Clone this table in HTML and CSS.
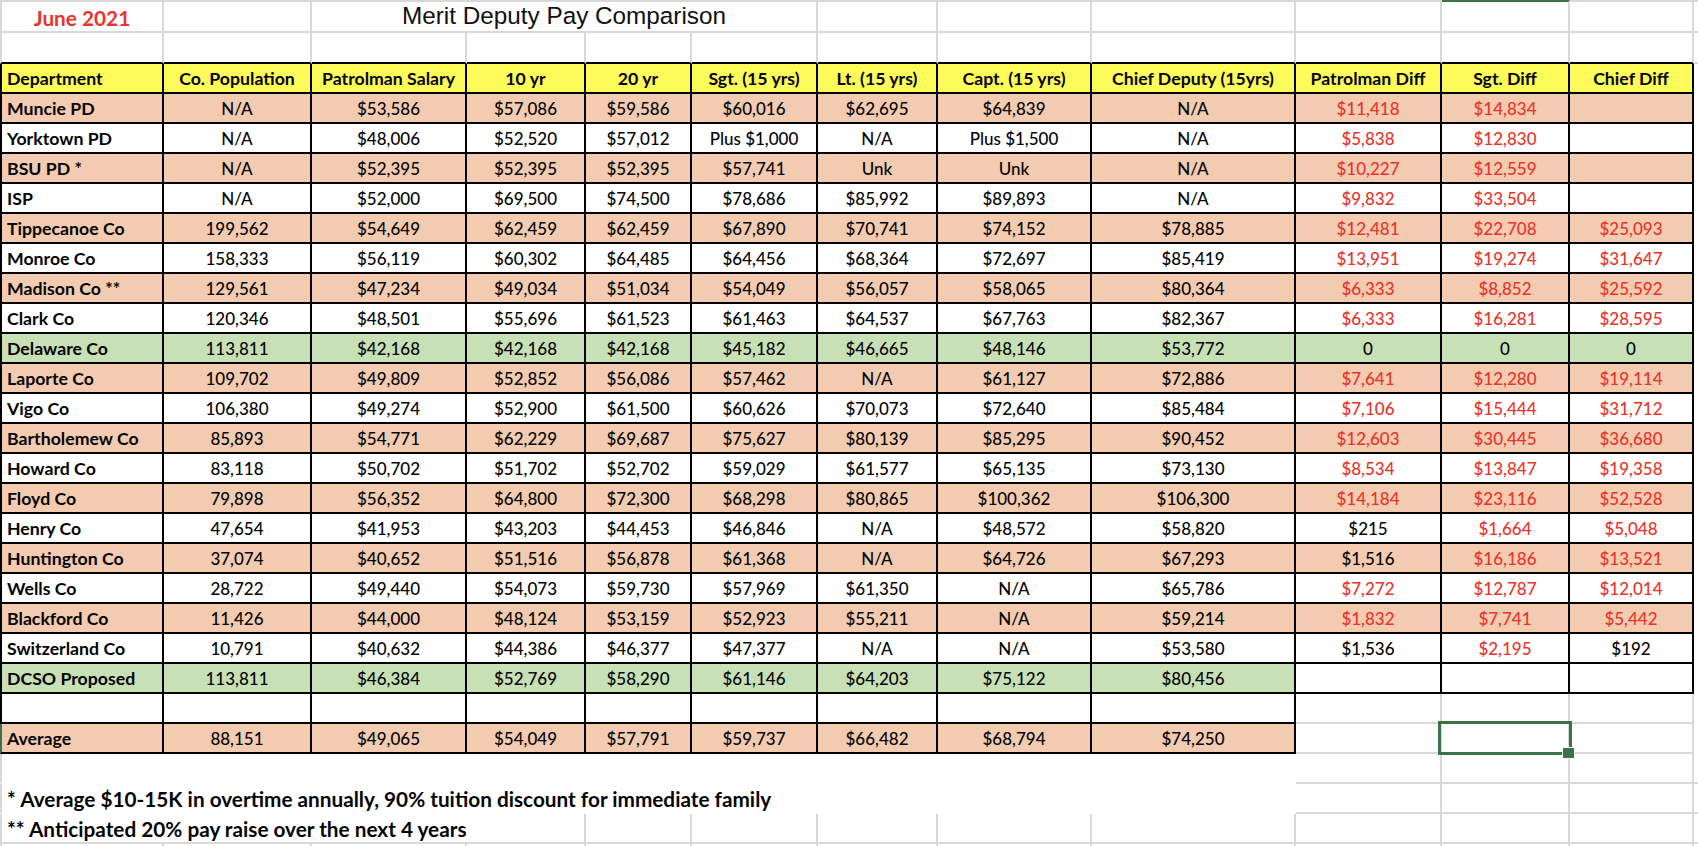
FILE: index.html
```html
<!DOCTYPE html>
<html lang="en">
<head>
<meta charset="utf-8">
<title>Merit Deputy Pay Comparison</title>
<link rel="stylesheet" href="styles.css">
</head>
<body>
<div class="sheet">
  <div class="row r1">
    <div class="c june">June 2021</div>
    <div class="c"></div>
    <div class="c title">Merit Deputy Pay Comparison</div>
    <div class="c"></div>
    <div class="c"></div>
    <div class="c"></div>
    <div class="c"></div>
    <div class="c selcol"></div>
    <div class="c"></div>
    <div class="c x"></div>
  </div>
  <div class="row r2">
    <div class="c"></div><div class="c"></div><div class="c"></div><div class="c"></div>
    <div class="c"></div><div class="c"></div><div class="c"></div><div class="c"></div>
    <div class="c"></div><div class="c"></div><div class="c"></div><div class="c"></div>
    <div class="c x"></div>
  </div>
  <div class="row t head">
    <div class="c d">Department</div><div class="c">Co. Population</div><div class="c">Patrolman Salary</div><div class="c">10 yr</div><div class="c">20 yr</div><div class="c">Sgt. (15 yrs)</div><div class="c">Lt. (15 yrs)</div><div class="c">Capt. (15 yrs)</div><div class="c">Chief Deputy (15yrs)</div><div class="c">Patrolman Diff</div><div class="c">Sgt. Diff</div><div class="c">Chief Diff</div>
  </div>
  <div class="row t pe">
    <div class="c d">Muncie PD</div><div class="c">N/A</div><div class="c">$53,586</div><div class="c">$57,086</div><div class="c">$59,586</div><div class="c">$60,016</div><div class="c">$62,695</div><div class="c">$64,839</div><div class="c">N/A</div><div class="c red">$11,418</div><div class="c red">$14,834</div><div class="c"></div>
  </div>
  <div class="row t">
    <div class="c d">Yorktown PD</div><div class="c">N/A</div><div class="c">$48,006</div><div class="c">$52,520</div><div class="c">$57,012</div><div class="c">Plus $1,000</div><div class="c">N/A</div><div class="c">Plus $1,500</div><div class="c">N/A</div><div class="c red">$5,838</div><div class="c red">$12,830</div><div class="c"></div>
  </div>
  <div class="row t pe">
    <div class="c d">BSU PD *</div><div class="c">N/A</div><div class="c">$52,395</div><div class="c">$52,395</div><div class="c">$52,395</div><div class="c">$57,741</div><div class="c">Unk</div><div class="c">Unk</div><div class="c">N/A</div><div class="c red">$10,227</div><div class="c red">$12,559</div><div class="c"></div>
  </div>
  <div class="row t">
    <div class="c d">ISP</div><div class="c">N/A</div><div class="c">$52,000</div><div class="c">$69,500</div><div class="c">$74,500</div><div class="c">$78,686</div><div class="c">$85,992</div><div class="c">$89,893</div><div class="c">N/A</div><div class="c red">$9,832</div><div class="c red">$33,504</div><div class="c"></div>
  </div>
  <div class="row t pe">
    <div class="c d">Tippecanoe Co</div><div class="c">199,562</div><div class="c">$54,649</div><div class="c">$62,459</div><div class="c">$62,459</div><div class="c">$67,890</div><div class="c">$70,741</div><div class="c">$74,152</div><div class="c">$78,885</div><div class="c red">$12,481</div><div class="c red">$22,708</div><div class="c red">$25,093</div>
  </div>
  <div class="row t">
    <div class="c d">Monroe Co</div><div class="c">158,333</div><div class="c">$56,119</div><div class="c">$60,302</div><div class="c">$64,485</div><div class="c">$64,456</div><div class="c">$68,364</div><div class="c">$72,697</div><div class="c">$85,419</div><div class="c red">$13,951</div><div class="c red">$19,274</div><div class="c red">$31,647</div>
  </div>
  <div class="row t pe">
    <div class="c d">Madison Co **</div><div class="c">129,561</div><div class="c">$47,234</div><div class="c">$49,034</div><div class="c">$51,034</div><div class="c">$54,049</div><div class="c">$56,057</div><div class="c">$58,065</div><div class="c">$80,364</div><div class="c red">$6,333</div><div class="c red">$8,852</div><div class="c red">$25,592</div>
  </div>
  <div class="row t">
    <div class="c d">Clark Co</div><div class="c">120,346</div><div class="c">$48,501</div><div class="c">$55,696</div><div class="c">$61,523</div><div class="c">$61,463</div><div class="c">$64,537</div><div class="c">$67,763</div><div class="c">$82,367</div><div class="c red">$6,333</div><div class="c red">$16,281</div><div class="c red">$28,595</div>
  </div>
  <div class="row t gr">
    <div class="c d">Delaware Co</div><div class="c">113,811</div><div class="c">$42,168</div><div class="c">$42,168</div><div class="c">$42,168</div><div class="c">$45,182</div><div class="c">$46,665</div><div class="c">$48,146</div><div class="c">$53,772</div><div class="c">0</div><div class="c">0</div><div class="c">0</div>
  </div>
  <div class="row t pe">
    <div class="c d">Laporte Co</div><div class="c">109,702</div><div class="c">$49,809</div><div class="c">$52,852</div><div class="c">$56,086</div><div class="c">$57,462</div><div class="c">N/A</div><div class="c">$61,127</div><div class="c">$72,886</div><div class="c red">$7,641</div><div class="c red">$12,280</div><div class="c red">$19,114</div>
  </div>
  <div class="row t">
    <div class="c d">Vigo Co</div><div class="c">106,380</div><div class="c">$49,274</div><div class="c">$52,900</div><div class="c">$61,500</div><div class="c">$60,626</div><div class="c">$70,073</div><div class="c">$72,640</div><div class="c">$85,484</div><div class="c red">$7,106</div><div class="c red">$15,444</div><div class="c red">$31,712</div>
  </div>
  <div class="row t pe">
    <div class="c d">Bartholemew Co</div><div class="c">85,893</div><div class="c">$54,771</div><div class="c">$62,229</div><div class="c">$69,687</div><div class="c">$75,627</div><div class="c">$80,139</div><div class="c">$85,295</div><div class="c">$90,452</div><div class="c red">$12,603</div><div class="c red">$30,445</div><div class="c red">$36,680</div>
  </div>
  <div class="row t">
    <div class="c d">Howard Co</div><div class="c">83,118</div><div class="c">$50,702</div><div class="c">$51,702</div><div class="c">$52,702</div><div class="c">$59,029</div><div class="c">$61,577</div><div class="c">$65,135</div><div class="c">$73,130</div><div class="c red">$8,534</div><div class="c red">$13,847</div><div class="c red">$19,358</div>
  </div>
  <div class="row t pe">
    <div class="c d">Floyd Co</div><div class="c">79,898</div><div class="c">$56,352</div><div class="c">$64,800</div><div class="c">$72,300</div><div class="c">$68,298</div><div class="c">$80,865</div><div class="c">$100,362</div><div class="c">$106,300</div><div class="c red">$14,184</div><div class="c red">$23,116</div><div class="c red">$52,528</div>
  </div>
  <div class="row t">
    <div class="c d">Henry Co</div><div class="c">47,654</div><div class="c">$41,953</div><div class="c">$43,203</div><div class="c">$44,453</div><div class="c">$46,846</div><div class="c">N/A</div><div class="c">$48,572</div><div class="c">$58,820</div><div class="c">$215</div><div class="c red">$1,664</div><div class="c red">$5,048</div>
  </div>
  <div class="row t pe">
    <div class="c d">Huntington Co</div><div class="c">37,074</div><div class="c">$40,652</div><div class="c">$51,516</div><div class="c">$56,878</div><div class="c">$61,368</div><div class="c">N/A</div><div class="c">$64,726</div><div class="c">$67,293</div><div class="c">$1,516</div><div class="c red">$16,186</div><div class="c red">$13,521</div>
  </div>
  <div class="row t">
    <div class="c d">Wells Co</div><div class="c">28,722</div><div class="c">$49,440</div><div class="c">$54,073</div><div class="c">$59,730</div><div class="c">$57,969</div><div class="c">$61,350</div><div class="c">N/A</div><div class="c">$65,786</div><div class="c red">$7,272</div><div class="c red">$12,787</div><div class="c red">$12,014</div>
  </div>
  <div class="row t pe">
    <div class="c d">Blackford Co</div><div class="c">11,426</div><div class="c">$44,000</div><div class="c">$48,124</div><div class="c">$53,159</div><div class="c">$52,923</div><div class="c">$55,211</div><div class="c">N/A</div><div class="c">$59,214</div><div class="c red">$1,832</div><div class="c red">$7,741</div><div class="c red">$5,442</div>
  </div>
  <div class="row t">
    <div class="c d">Switzerland Co</div><div class="c">10,791</div><div class="c">$40,632</div><div class="c">$44,386</div><div class="c">$46,377</div><div class="c">$47,377</div><div class="c">N/A</div><div class="c">N/A</div><div class="c">$53,580</div><div class="c">$1,536</div><div class="c red">$2,195</div><div class="c">$192</div>
  </div>
  <div class="row t">
    <div class="c d gf">DCSO Proposed</div><div class="c gf">113,811</div><div class="c gf">$46,384</div><div class="c gf">$52,769</div><div class="c gf">$58,290</div><div class="c gf">$61,146</div><div class="c gf">$64,203</div><div class="c gf">$75,122</div><div class="c gf">$80,456</div><div class="c"></div><div class="c"></div><div class="c"></div>
  </div>
  <div class="row t">
    <div class="c d"></div><div class="c"></div><div class="c"></div><div class="c"></div><div class="c"></div><div class="c"></div><div class="c"></div><div class="c"></div><div class="c"></div><div class="c g"></div><div class="c g"></div><div class="c g"></div>
  </div>
  <div class="row t avg">
    <div class="c d pf">Average</div><div class="c pf">88,151</div><div class="c pf">$49,065</div><div class="c pf">$54,049</div><div class="c pf">$57,791</div><div class="c pf">$59,737</div><div class="c pf">$66,482</div><div class="c pf">$68,794</div><div class="c pf">$74,250</div><div class="c g"></div><div class="c g active"><span class="selbox"></span><span class="handle"></span></div><div class="c g"></div>
  </div>
  <div class="row">
    <div class="c n span9"></div><div class="c"></div><div class="c"></div><div class="c"></div><div class="c x"></div>
  </div>
  <div class="row">
    <div class="c n span9 note">* Average $10-15K in overtime annually, 90% tuition discount for immediate family</div><div class="c"></div><div class="c"></div><div class="c"></div><div class="c x"></div>
  </div>
  <div class="row">
    <div class="c span4 note">** Anticipated 20% pay raise over the next 4 years</div><div class="c"></div><div class="c"></div><div class="c"></div><div class="c"></div><div class="c"></div><div class="c"></div><div class="c"></div><div class="c"></div><div class="c x"></div>
  </div>
  <div class="row">
    <div class="c"></div><div class="c"></div><div class="c"></div><div class="c"></div>
    <div class="c"></div><div class="c"></div><div class="c"></div><div class="c"></div>
    <div class="c"></div><div class="c"></div><div class="c"></div><div class="c"></div>
    <div class="c x"></div>
  </div>
</div>
</body>
</html>
```

FILE: styles.css
```css
html, body {
  margin: 0;
  padding: 0;
  background: #ffffff;
}

body {
  font-family: Lato, "Open Sans", "Liberation Sans", sans-serif;
  font-size: 17px;
  font-weight: 500;
  color: #050505;
}

.sheet {
  width: 1698px;
  height: 846px;
  overflow: hidden;
}

.row {
  display: grid;
  grid-template-columns: 164px 148px 155px 119px 106px 126px 120px 154px 204px 146px 128px 124px 1fr;
  height: 30px;
}

.c {
  box-sizing: border-box;
  display: flex;
  align-items: center;
  justify-content: center;
  white-space: nowrap;
  border-right: 2px solid #d8d8d8;
  border-bottom: 2px solid #d8d8d8;
  padding-top: 1px;
  min-width: 0;
}

.c:first-child {
  border-left: 2px solid #d8d8d8;
}

.c.x {
  border-right: none;
}

/* title rows */
.r1 {
  height: 33px;
}

.r1 .c {
  border-top: 2px solid #d8d8d8;
}

.r1 .c.selcol {
  border-top-color: #3b7248;
}

.june {
  color: #e9342b;
  font-weight: 700;
  font-size: 20.8px;
}

.title {
  grid-column: span 4;
  font-family: "Liberation Sans", Arial, sans-serif;
  font-weight: 400;
  font-size: 24.3px;
  color: #111111;
  padding-top: 0;
  padding-bottom: 1px;
}

.r2 {
  height: 31px;
}

.r2 .c {
  border-bottom-color: #000000;
}

.r2 .c.x {
  border-bottom-color: #d8d8d8;
}

/* table rows */
.t .c {
  border-right-color: #000000;
  border-bottom-color: #000000;
}

.t .c:first-child {
  border-left-color: #000000;
}

.t .c.g {
  border-right-color: #d8d8d8;
  border-bottom-color: #d8d8d8;
}

.head .c {
  background: #fdfb5a;
  font-weight: 700;
  font-size: 17.7px;
}

.pe .c,
.c.pf {
  background: #f3cbb0;
}

.gr .c,
.c.gf {
  background: #c8e0b6;
}

.c.d {
  justify-content: flex-start;
  padding-left: 5px;
  font-weight: 700;
  font-size: 17.7px;
}

.red {
  color: #e9342b;
}

.avg .c:first-child {
  border-left-color: #3b7248;
}

.active {
  position: relative;
}

.selbox {
  position: absolute;
  left: -4px;
  top: -3px;
  width: 134px;
  height: 34px;
  box-sizing: border-box;
  border: 3px solid #3b7248;
}

.handle {
  position: absolute;
  left: 120px;
  top: 23px;
  width: 13px;
  height: 12px;
  box-sizing: border-box;
  background: #3b7248;
  border: 1px solid #ffffff;
}

/* below the table */
.span9 {
  grid-column: span 9;
}

.span4 {
  grid-column: span 4;
}

.c.n {
  border-right-color: transparent;
  border-bottom-color: transparent;
}

.note {
  justify-content: flex-start;
  padding-left: 5px;
  font-weight: 700;
  font-size: 20.75px;
  overflow: visible;
}
```
